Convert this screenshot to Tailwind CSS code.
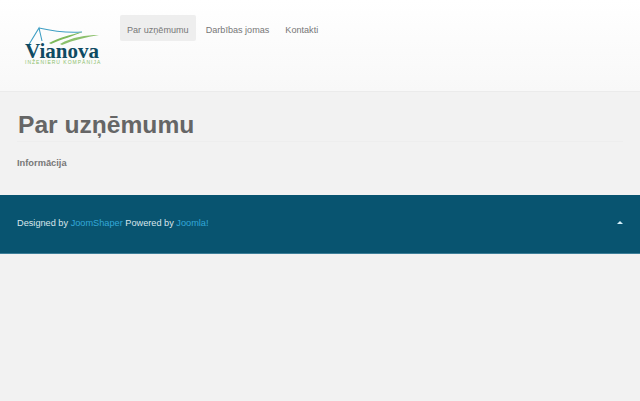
<!DOCTYPE html>
<html lang="en">
<head>
    <meta charset="UTF-8">
    <meta name="viewport" content="width=device-width, initial-scale=1.0">
    <title>Par uzņēmumu</title>
    <script src="https://cdn.jsdelivr.net/npm/@tailwindcss/browser@4"></script>
</head>
<body class="bg-[#f2f2f2] font-['Liberation_Sans',Arial,sans-serif] text-[#666]">

    <!-- Header -->
    <header class="h-[92px] flex bg-gradient-to-b from-white to-[#f8f8f8] border-b border-[#ebebeb]">
        <div class="w-[120px] pl-[24px] pt-[26px]">
            <svg width="78" height="20" viewBox="0 0 78 20" class="block" fill="none">
                <path d="M4 20 L15 2 L18 15 M15 2 C28 5 42 7 58 6" stroke="#3f9fc4" stroke-width="1.1"/>
                <path d="M25 17 C36 11 46 9 58 6 C50 10 38 13 27 18 Z" fill="#7db95a"/>
                <path d="M36 18 C48 11 62 9 75 9 C62 11 50 14 38 19 Z" fill="#8cc06c"/>
            </svg>
            <div class="font-['Liberation_Serif',serif] font-bold text-[21px] leading-[16px] text-[#0f4a63] -mt-[3px] ml-[1px] whitespace-nowrap">Vianova</div>
            <div class="text-[5px] leading-[6px] ml-[1px] text-[#8cc06c] tracking-[1px] whitespace-nowrap">INŽENIERU KOMPĀNIJA</div>
        </div>
        <nav class="flex items-start pt-[15px] text-[9.1px] leading-[30px] h-[45px] text-[#777]">
            <a class="px-[7px] h-[26px] bg-[#eeeeee] rounded-[2px]">Par uzņēmumu</a>
            <a class="ml-[2px] px-[8px]">Darbības jomas</a>
            <a class="px-[8px]">Kontakti</a>
        </nav>
    </header>

    <!-- Main Content -->
    <main class="h-[103px] px-[17px]">
        <h1 class="text-[24.6px] leading-[30px] pt-[18px] pb-[2px] pl-[1px] h-[50px] font-bold text-[#666] border-b border-[#eeeeee]">Par uzņēmumu</h1>
        <p class="mt-[13px] text-[9.3px] leading-[16px] font-bold text-[#777]">Informācija</p>
    </main>

    <!-- Footer -->
    <footer class="h-[59px] bg-[#085470] border-b border-[#3d7f99] flex justify-between px-[17px] pt-[21px] text-[9.2px] leading-[14px] text-[#d9e6ec]">
        <div>Designed by <a class="text-[#33a8d8]">JoomShaper</a> Powered by <a class="text-[#33a8d8]">Joomla!</a></div>
        <div class="w-0 h-0 mt-[5px] border-x-[3px] border-x-transparent border-b-[3px] border-b-[#d4f0fa]"></div>
    </footer>

</body>
</html>
